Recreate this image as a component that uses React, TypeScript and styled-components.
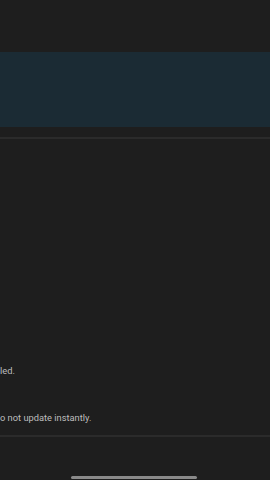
import styled, { createGlobalStyle } from "styled-components";

const GlobalStyle = createGlobalStyle`
  html, body {
    margin: 0;
    padding: 0;
    background: #1e1e1e;
  }
  body {
    font-family: Roboto, "Noto Sans", "DejaVu Sans", sans-serif;
    overflow: hidden;
  }
`

const Screen = styled.div`
  width: 270px;
  height: 480px;
  background: #1e1e1e;
  display: flex;
  flex-direction: column;
  overflow: hidden;
`

const TopGap = styled.div`
  height: 52px;
`

const Banner = styled.div`
  height: 75px;
  background: #1b2b34;
`

const Divider = styled.div<{ $top: number }>`
  height: 2px;
  margin-top: ${p => p.$top}px;
  background: #2b2b2b;
`

const Spacer = styled.div`
  flex: 1;
`

const Note = styled.p`
  margin: 0;
  font-size: 9.3px;
  line-height: 12px;
  color: #bdbdbd;
  white-space: nowrap;
`

const Body = styled.div`
  height: 296px;
  display: flex;
  flex-direction: column;
  justify-content: flex-end;
  gap: 35px;
  padding-bottom: 11px;
  box-sizing: border-box;
`

const HomeBar = styled.div`
  align-self: center;
  width: 126px;
  height: 3px;
  border-radius: 2px;
  background: #8a8a8a;
  margin: 0 0 1px -3px;
`

export default function App() {
  return (
    <Screen>
      <GlobalStyle />
      <TopGap />
      <Banner />
      <Divider $top={10} />
      <Body>
        <Note>led.</Note>
        <Note>o not update instantly.</Note>
      </Body>
      <Divider $top={0} />
      <Spacer />
      <HomeBar />
    </Screen>
  )
}
